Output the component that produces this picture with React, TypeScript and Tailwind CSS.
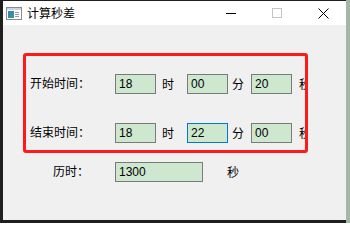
const cjk = { fontFamily: '"Noto Sans CJK SC", "Microsoft YaHei", sans-serif' };
const num = { fontFamily: '"Liberation Sans", Arial, sans-serif' };

const Field = ({ value, w = "w-[41px]", focused = false }: { value: string; w?: string; focused?: boolean }) => (
  <div
    className={`${w} h-[20px] shrink-0 border bg-[#cde8cf] flex items-center pl-[3px] text-[12px] text-black ${
      focused ? "border-[#0078d7]" : "border-[#7a7a7a]"
    }`}
    style={num}
  >
    {value}
  </div>
);

const Unit = ({ text, w, pl }: { text: string; w: string; pl: string }) => (
  <div className={`${w} ${pl} shrink-0 overflow-hidden whitespace-nowrap text-[12px] text-black leading-[20px]`} style={cjk}>
    {text}
  </div>
);

const TimeRow = ({ label, h, m, s, focusMin = false }: { label: string; h: string; m: string; s: string; focusMin?: boolean }) => (
  <div className="flex items-center h-[20px] pl-[27px]">
    <div className="w-[85px] shrink-0 text-[12px] text-black -mt-[2px]" style={cjk}>
      {label}
    </div>
    <Field value={h} />
    <Unit text="时" w="w-[31px]" pl="pl-[6px]" />
    <Field value={m} focused={focusMin} />
    <Unit text="分" w="w-[23px]" pl="pl-[4px]" />
    <Field value={s} />
    <Unit text="秒" w="w-[14px]" pl="pl-[7px]" />
  </div>
);

const AppIcon = () => (
  <svg width="16" height="13" viewBox="0 0 16 13" className="shrink-0">
    <rect x="0.5" y="0.5" width="15" height="12" fill="#fff" stroke="#8a8a8a" />
    <rect x="1" y="1" width="14" height="2" fill="#c8d4e0" />
    <defs>
      <linearGradient id="g" x1="0" y1="0" x2="1" y2="1">
        <stop offset="0" stopColor="#3a7bd5" />
        <stop offset="1" stopColor="#3aa07a" />
      </linearGradient>
    </defs>
    <rect x="2" y="4" width="6" height="7" fill="url(#g)" />
    <rect x="9" y="5" width="4" height="1" fill="#9a9a9a" />
    <rect x="9" y="7" width="4" height="1" fill="#9a9a9a" />
    <rect x="9" y="9" width="4" height="1" fill="#9a9a9a" />
  </svg>
);

const App = () => {
  return (
    <div className="w-[350px] h-[223px] bg-[#1f1f1f] flex overflow-hidden">
      <div className="ml-[3px] mt-[1px] w-[343px] h-[219px] flex flex-col bg-[#f0f0f0]">
        {/* title bar */}
        <div className="h-[24px] bg-white flex items-center shrink-0">
          <div className="pl-[3px] pt-[1px] flex items-center">
            <AppIcon />
          </div>
          <span className="ml-[5px] text-[12px] text-black" style={cjk}>
            计算秒差
          </span>
          <div className="flex-1" />
          <div className="w-[46px] h-full flex items-center justify-center">
            <div className="w-[10px] h-px bg-black" />
          </div>
          <div className="w-[46px] h-full flex items-center justify-center">
            <div className="w-[10px] h-[10px] border border-[#c4c4c4]" />
          </div>
          <div className="w-[46px] h-full flex items-center justify-center">
            <svg width="11" height="11" viewBox="0 0 11 11">
              <path d="M0.5 0.5 L10.5 10.5 M10.5 0.5 L0.5 10.5" stroke="#000" strokeWidth="1" />
            </svg>
          </div>
        </div>

        {/* body */}
        <div className="relative flex-1 flex flex-col pt-[49px]">
          <TimeRow label="开始时间：" h="18" m="00" s="20" />
          <div className="mt-[29px]">
            <TimeRow label="结束时间：" h="18" m="22" s="00" focusMin />
          </div>
          <div className="mt-[19px] flex items-center h-[20px] pl-[50px]">
            <div className="w-[62px] shrink-0 text-[12px] text-black -mt-[2px]" style={cjk}>
              历时：
            </div>
            <Field value="1300" w="w-[88px]" />
            <div className="pl-[24px] text-[12px] text-black" style={cjk}>
              秒
            </div>
          </div>

          {/* red annotation frame */}
          <div className="absolute left-[20px] top-[28px] w-[285px] h-[100px] border-[3px] border-[#ff1a1a] rounded-[3px] pointer-events-none" />
        </div>
      </div>
      <div className="flex-1 h-full bg-[#a3b7a4]" />
    </div>
  );
};

export default App;
